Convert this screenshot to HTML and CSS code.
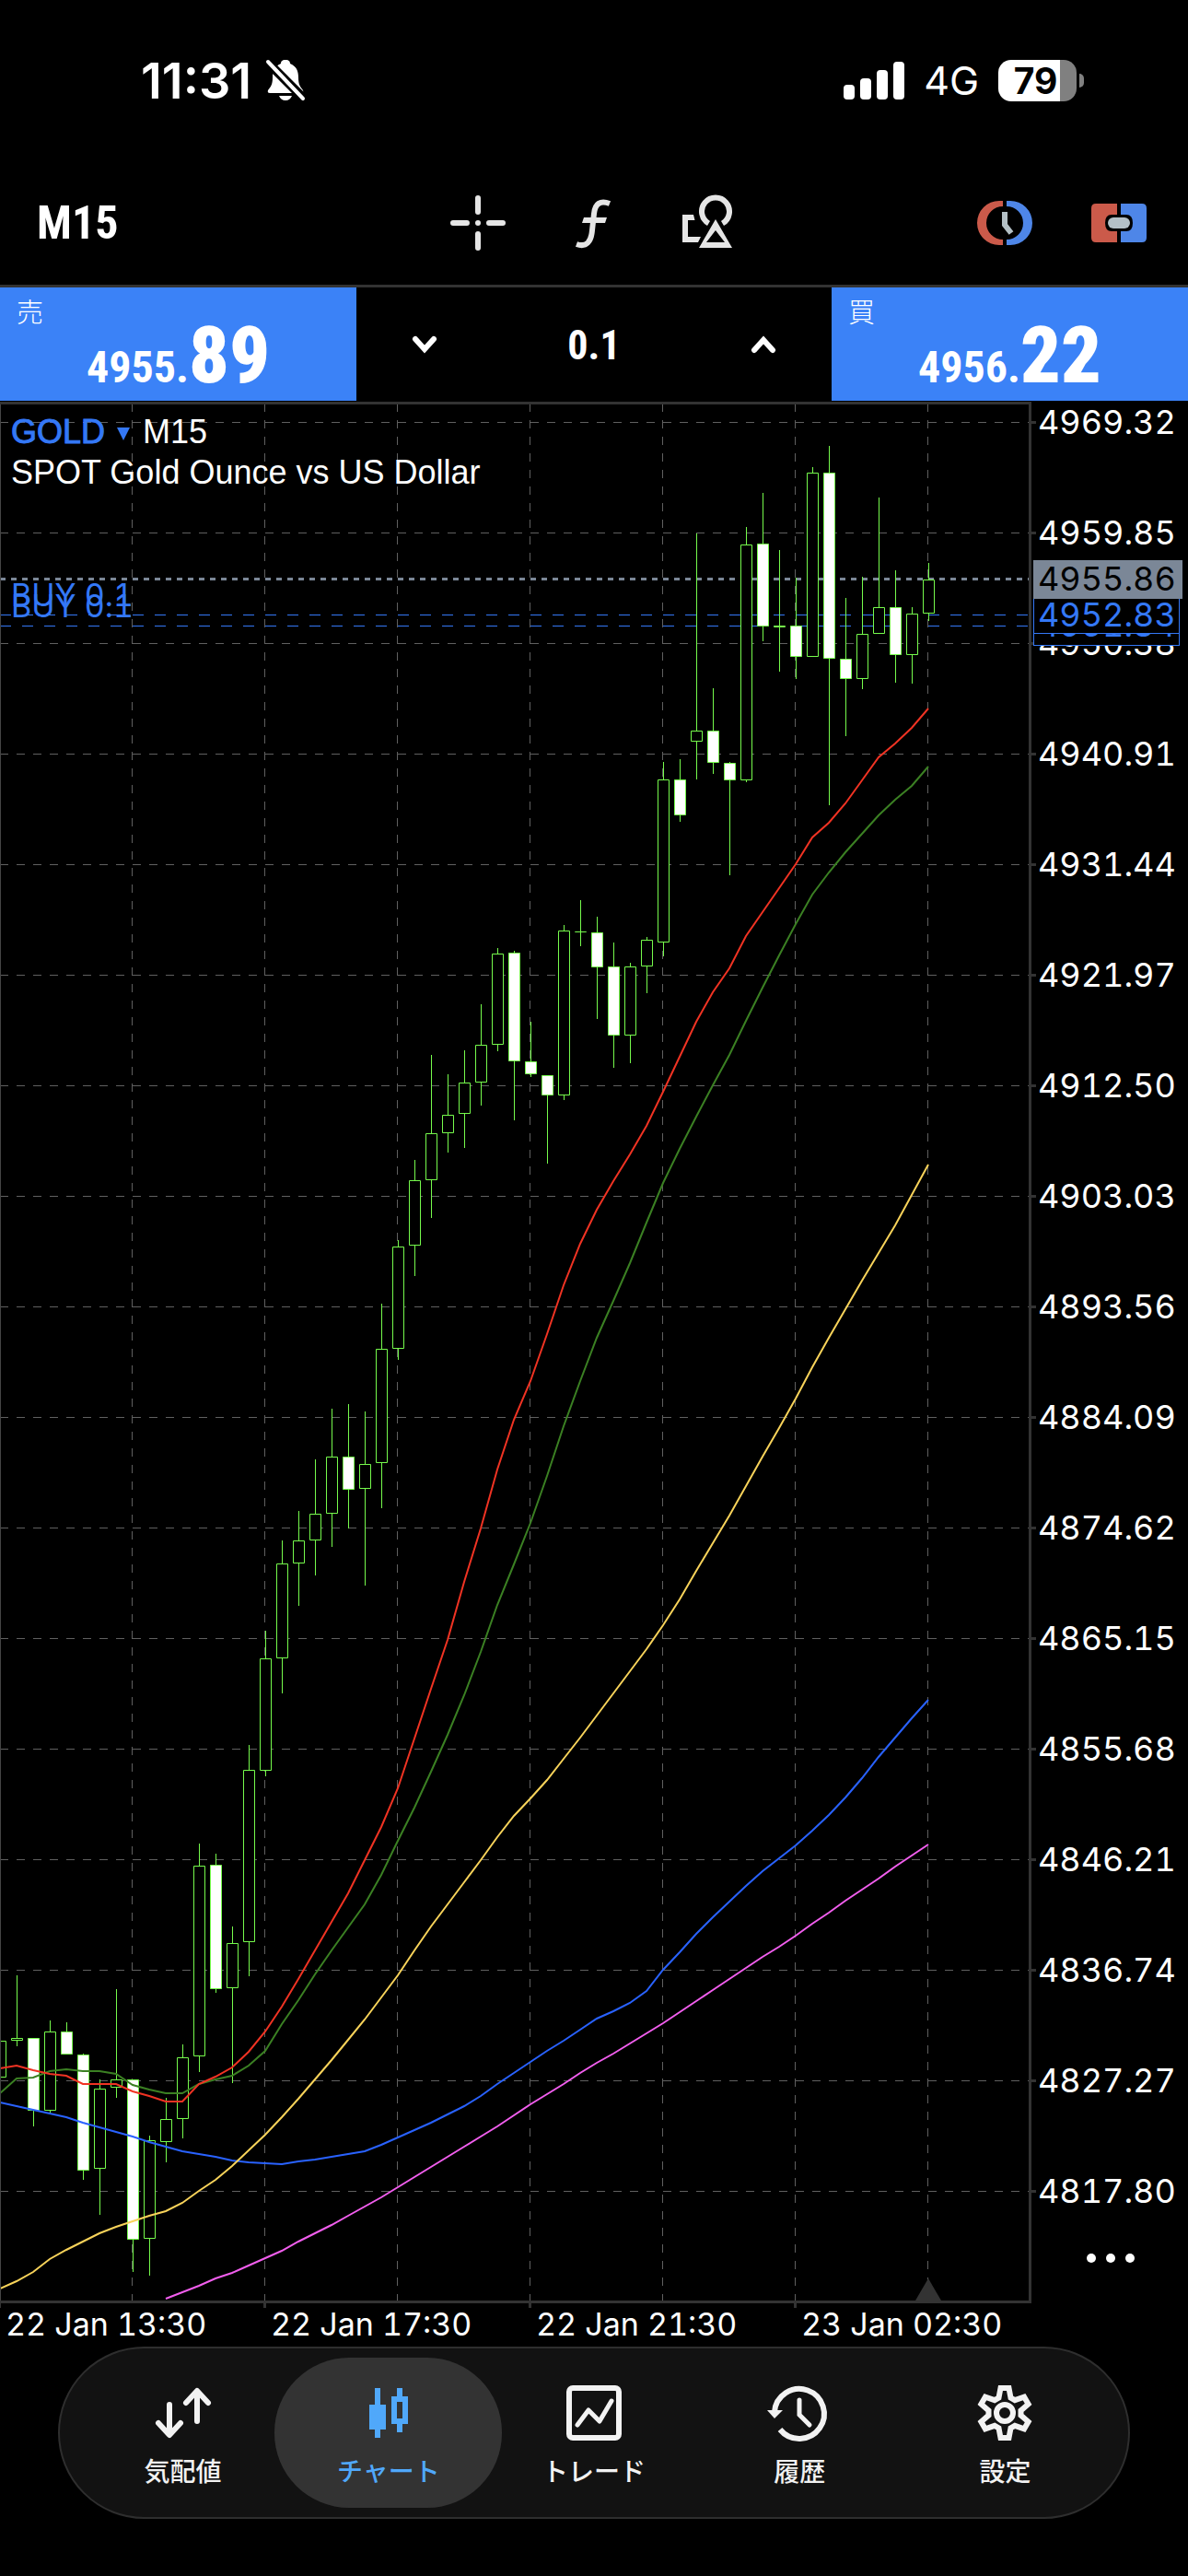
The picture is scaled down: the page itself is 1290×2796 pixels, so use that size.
FILE: index.html
```html
<!DOCTYPE html>
<html lang="ja">
<head>
    <meta charset="UTF-8">
    <meta name="viewport" content="width=device-width, initial-scale=1.0">
    <title>GOLD M15</title>
    <link rel="stylesheet" href="styles.css">
</head>
<body>
    <div class="status-bar">
        <div class="status-group">
            <span class="clock">11:31</span>
            <svg class="bell" viewBox="0 0 44 46">
                <path d="M22 1c-4 0-5 2-5 4C10 8 8 13 8 20C8 28 6 30 3 34Q2 37 5 37H39Q42 37 41 34C38 30 36 28 36 20C36 13 34 8 27 5C27 3 26 1 22 1Z" fill="#fff"/>
                <path d="M15 40H29Q27 45 22 45Q17 45 15 40Z" fill="#fff"/>
                <path d="M2 3L42 43" stroke="#000" stroke-width="10"/>
                <path d="M3 3L41 43" stroke="#fff" stroke-width="4" stroke-linecap="round"/>
            </svg>
        </div>
        <div class="status-group status-right">
            <svg class="signal" viewBox="0 0 66 42" fill="#fff">
                <rect x="0" y="26" width="12" height="16" rx="4"/>
                <rect x="18" y="19" width="12" height="23" rx="4"/>
                <rect x="36" y="10" width="12" height="32" rx="4"/>
                <rect x="54" y="1" width="12" height="41" rx="4"/>
            </svg>
            <span class="network">4G</span>
            <div class="battery"><span class="battery-level">79</span></div>
        </div>
    </div>

    <header class="toolbar">
        <button type="button" class="timeframe">M15</button>
        <div class="tools">
            <button type="button" aria-label="十字線">
                <svg class="icon" viewBox="0 0 60 60" fill="none" stroke="#e5e5e5" stroke-width="6" stroke-linecap="round">
                    <path d="M30 3V18M30 42V57M3 30H18M42 30H57M30 30V30"/>
                </svg>
            </button>
            <button type="button" aria-label="インディケータ">
                <svg class="icon" viewBox="0 0 60 60">
                    <path d="M49 9C39 5 33 9 32 20L30 38C29 50 24 57 13 53" fill="none" stroke="#e5e5e5" stroke-width="6"/>
                    <path d="M21 24H46L44 30H19Z" fill="#e5e5e5"/>
                </svg>
            </button>
            <button type="button" aria-label="オブジェクト">
                <svg class="icon" viewBox="0 0 60 60">
                    <path d="M32.5 30.5A15 15 0 1 1 47.5 30.5" fill="none" stroke="#e5e5e5" stroke-width="6"/>
                    <path d="M40 26L58 57H22ZM40 38L30 51H50Z" fill="#e5e5e5" fill-rule="evenodd"/>
                    <path d="M4 21H16L17.5 27H10V45H24L21 51H4Z" fill="#e5e5e5"/>
                </svg>
            </button>
        </div>
        <div class="tools tools-right">
            <button type="button" aria-label="板情報">
                <svg class="icon" viewBox="0 0 60 60" fill="none">
                    <path d="M28 6H24A24 24 0 0 0 24 54H28V48A18 18 0 0 1 28 12Z" fill="#cb5a4a"/>
                    <path d="M32 6H36A24 24 0 0 1 36 54H32V48A18 18 0 0 0 32 12Z" fill="#4e86e8"/>
                    <path d="M30 18V32L37 41" stroke="#b4c0c6" stroke-width="6"/>
                </svg>
            </button>
            <button type="button" aria-label="ワンクリック注文">
                <svg class="icon" viewBox="0 0 60 60">
                    <path d="M28 9H5Q0 9 0 14V46Q0 51 5 51H28V39H22Q15 39 15 30Q15 21 22 21H28Z" fill="#cb5a4a"/>
                    <path d="M32 9H55Q60 9 60 14V46Q60 51 55 51H32V39H38Q45 39 45 30Q45 21 38 21H32Z" fill="#4e86e8"/>
                    <rect x="18" y="24" width="24" height="12" rx="6" fill="#b4c0c6"/>
                </svg>
            </button>
        </div>
    </header>

    <section class="trade-panel">
        <button type="button" class="quote">
            <span class="quote-side">売</span>
            <span class="quote-price">4955.<b>89</b></span>
        </button>
        <div class="volume">
            <button type="button" aria-label="減らす">
                <svg class="chevron" viewBox="0 0 28 20"><path d="M4 4L14 15L24 4"/></svg>
            </button>
            <input type="text" value="0.1" aria-label="ロット">
            <button type="button" aria-label="増やす">
                <svg class="chevron" viewBox="0 0 28 20"><path d="M4 16L14 5L24 16"/></svg>
            </button>
        </div>
        <button type="button" class="quote">
            <span class="quote-side">買</span>
            <span class="quote-price">4956.<b>22</b></span>
        </button>
    </section>

    <main class="chart">
        <svg id="chart" viewBox="0 436 1290 2111">
            <g id="grid" class="grid"></g>
            <path class="bid-line" d="M0 628.5H1117"/>
            <path class="order-line" d="M0 667.5H1117M0 679.5H1117"/>
            <path class="marker" d="M1008 2473L1022 2497H994Z"/>
            <g id="candles" class="candles"></g>
            <g id="averages" class="averages"></g>
            <path class="frame-left" d="M0.5 436V2500"/>
            <path id="frame" class="frame" d="M0 437.5H1118.5V2498.5H0"/>
            <g id="labels" class="axis-text"></g>

            <text class="chart-title" x="12" y="481"><tspan class="symbol">GOLD</tspan></text>
            <path d="M127 464H141L134 478Z" fill="#3478f6"/>
            <text class="chart-title" x="155" y="481">M15</text>
            <text class="chart-title" x="12" y="525">SPOT Gold Ounce vs US Dollar</text>
            <text class="axis-text order-text order-label" x="12" y="658">BUY 0.1</text>
            <text class="axis-text order-text order-label" x="12" y="670">BUY 0.1</text>

            <rect class="order-tag" x="1122.5" y="663.5" width="158" height="37"/>
            <text class="axis-text order-text" x="1127" y="691">4951.84</text>
            <rect class="order-tag" x="1122.5" y="649.5" width="158" height="38"/>
            <text class="axis-text order-text" x="1127" y="680">4952.83</text>
            <rect class="bid-tag" x="1122" y="608" width="162" height="42"/>
            <text class="axis-text bid-text" x="1127" y="641">4955.86</text>
        </svg>
        <button type="button" class="more" aria-label="その他">
            <svg viewBox="0 0 54 12" fill="#fff"><circle cx="6" cy="6" r="5"/><circle cx="27" cy="6" r="5"/><circle cx="48" cy="6" r="5"/></svg>
        </button>
    </main>

    <nav class="tab-bar">
        <a href="#quotes">
            <svg class="icon" viewBox="0 0 60 60" fill="none" stroke="currentColor" stroke-width="6" stroke-linecap="round" stroke-linejoin="round">
                <path d="M15 21V53M3 41L15 54L27 41M45 39V7M33 19L45 6L57 19"/>
            </svg>
            気配値
        </a>
        <a href="#chart" class="active">
            <svg class="icon" viewBox="0 0 60 60" fill="currentColor">
                <path d="M15 3H21V21H27V48H21V57H15V48H9V21H15Z"/>
                <path d="M39 3H45V12H51V42H45V51H39V42H33V12H39ZM39 18V36H45V18Z" fill-rule="evenodd"/>
            </svg>
            チャート
        </a>
        <a href="#trade">
            <svg class="icon" viewBox="0 0 60 60" fill="none" stroke="currentColor" stroke-width="6">
                <rect x="3" y="3" width="54" height="54" rx="4"/>
                <path d="M12 43L24 27L36 39L49 17" stroke-width="5" stroke-linecap="round" stroke-linejoin="round"/>
            </svg>
            トレード
        </a>
        <a href="#history">
            <svg class="icon" viewBox="0 0 60 60" fill="none" stroke="currentColor" stroke-width="6">
                <path d="M3 29A27 27 0 1 1 9 48"/>
                <path d="M30 16V32L41 43" stroke-width="5" stroke-linecap="round"/>
                <path d="M-5 27H12L3 36Z" fill="currentColor" stroke="none"/>
            </svg>
            履歴
        </a>
        <a href="#settings">
            <svg class="icon" viewBox="0 0 60 60" fill="none" stroke="currentColor" stroke-width="6">
                <path d="M23.5 13.5L25.5 3H34.5L36.5 13.5L41 16.1L51.1 12.6L55.6 20.4L47.5 27.4V32.6L55.6 39.6L51.1 47.4L41 43.9L36.5 46.5L34.5 57H25.5L23.5 46.5L19 43.9L8.9 47.4L4.4 39.6L12.5 32.6V27.4L4.4 20.4L8.9 12.6L19 16.1Z"/>
                <circle cx="30" cy="30" r="9"/>
            </svg>
            設定
        </a>
    </nav>

    <script src="chart.js"></script>
</body>
</html>
```

FILE: styles.css
```css
* {
    box-sizing: border-box;
}
body {
    margin: 0;
    background: #000;
    color: #fff;
    font-family: Inter, "Noto Sans CJK JP", sans-serif;
}
button {
    padding: 0;
    border: none;
    background: none;
    color: inherit;
    font-family: inherit;
    cursor: pointer;
}
svg {
    display: block;
}
.icon {
    width: 60px;
    height: 60px;
    overflow: visible;
}

/* status bar */
.status-bar {
    display: flex;
    justify-content: space-between;
    align-items: center;
    height: 174px;
    padding: 0 113px 0 153px;
}
.status-group {
    display: flex;
    align-items: center;
    gap: 15px;
}
.status-right {
    gap: 21px;
}
.clock {
    font-size: 54px;
    font-weight: 600;
}
.bell {
    width: 44px;
    height: 46px;
}
.signal {
    width: 66px;
    height: 42px;
}
.network {
    font-size: 43px;
}
.battery {
    position: relative;
    width: 85px;
    height: 45px;
    margin-right: 8px;
    border-radius: 14px;
    background: linear-gradient(to right, #fff 79%, #808080 79%);
}
.battery::after {
    content: "";
    position: absolute;
    top: 15px;
    right: -8px;
    width: 5px;
    height: 15px;
    border-radius: 0 5px 5px 0;
    background: #808080;
}
.battery-level {
    display: block;
    width: 79%;
    margin-left: 7px;
    color: #000;
    font-size: 39px;
    font-weight: 700;
    line-height: 45px;
    text-align: center;
}

/* toolbar */
.toolbar {
    display: grid;
    grid-template-columns: 1fr auto 1fr;
    align-items: center;
    height: 138px;
    padding: 0 45px 0 40px;
    border-bottom: 3px solid #333;
}
.timeframe {
    justify-self: start;
    font-family: "Roboto Condensed", Roboto, sans-serif;
    font-size: 50px;
    font-weight: 700;
}
.tools {
    display: flex;
    gap: 64px;
}
.tools-right {
    justify-self: end;
}

/* one click trading */
.trade-panel {
    display: grid;
    grid-template-columns: 3fr 4fr 3fr;
    height: 124px;
    padding-bottom: 1px;
}
.quote {
    display: flex;
    flex-direction: column;
    background: #3b82f7;
    font-family: "Roboto Condensed", Roboto, "Noto Sans CJK JP", sans-serif;
    text-align: left;
}
.quote-side {
    margin: 10px 0 0 18px;
    font-size: 29px;
    font-weight: 300;
    line-height: 36px;
}
.quote-price {
    align-self: center;
    font-size: 48px;
    font-weight: 700;
    line-height: 56px;
}
.quote-price b {
    font-size: 86px;
}
.volume {
    display: grid;
    grid-template-columns: 148px 1fr 148px;
}
.volume button {
    display: flex;
    align-items: center;
    justify-content: center;
}
.volume input {
    width: 100%;
    min-width: 0;
    padding: 3px 0 0;
    border: none;
    background: none;
    color: #fff;
    font-family: "Roboto Condensed", Roboto, sans-serif;
    font-size: 44px;
    font-weight: 700;
    text-align: center;
}
.chevron {
    width: 28px;
    height: 20px;
    fill: none;
    stroke: #fff;
    stroke-width: 6px;
    stroke-linecap: round;
}

/* chart */
.chart {
    position: relative;
}
#chart {
    width: 100%;
    height: auto;
}
.grid {
    stroke: #606060;
    stroke-dasharray: 9 9;
}
.bid-line {
    stroke: #7b8797;
    stroke-width: 3px;
    stroke-dasharray: 6 6;
}
.order-line {
    stroke: #3478f6;
    stroke-dasharray: 12 12;
}
.candles {
    fill: #000;
    stroke: #76fb4c;
}
.candles .down {
    fill: #fff;
}
.averages {
    fill: none;
    stroke-width: 2px;
}
.frame {
    fill: none;
    stroke: #333;
    stroke-width: 3px;
}
.frame-left {
    stroke: #444;
}
.ticks {
    stroke: #333;
    stroke-width: 3px;
}
.marker {
    fill: #333;
}
.axis-text {
    fill: #fff;
    font-size: 36px;
    font-variant-numeric: tabular-nums;
}
.time,
.order-label {
    font-size: 34px;
}
.chart-title {
    fill: #fff;
    font-family: "Liberation Sans", sans-serif;
    font-size: 36px;
}
.symbol {
    fill: #3478f6;
    stroke: #3478f6;
    stroke-width: 1px;
}
.order-text {
    fill: #3478f6;
}
.bid-text {
    fill: #000;
}
.order-tag {
    fill: #000;
    stroke: #3478f6;
}
.bid-tag {
    fill: #7b8797;
}
.more {
    position: absolute;
    right: 57px;
    bottom: 90px;
}
.more svg {
    width: 54px;
    height: 12px;
}

/* tab bar */
.tab-bar {
    display: grid;
    grid-template-columns: repeat(5, 1fr);
    height: 187px;
    margin: 0 63px 63px;
    padding: 10px 22px;
    border: 2px solid #2e2e2e;
    border-radius: 94px;
    background: #121212;
}
.tab-bar a {
    display: flex;
    flex-direction: column;
    align-items: center;
    gap: 13px;
    margin: 0 -12px;
    padding-top: 30px;
    border-radius: 81px;
    color: #f2f2f2;
    font-size: 28px;
    font-weight: 500;
    line-height: 42px;
    text-decoration: none;
}
.tab-bar .active {
    background: #333;
    color: #50a8fa;
}
```

FILE: chart.js
```js
const STEP = 18;

// high, body top, body bottom, low, 1 = bearish
const candles = [
    [2215, 2215, 2254, 2254], [2144, 2212, 2214, 2220], [2212, 2212, 2290, 2307, 1],
    [2193, 2205, 2290, 2293], [2195, 2205, 2229, 2229, 1], [2229, 2230, 2355, 2365, 1],
    [2257, 2267, 2353, 2403], [2159, 2257, 2265, 2276], [2257, 2257, 2430, 2465, 1],
    [2318, 2323, 2429, 2469], [2277, 2300, 2324, 2346], [2219, 2233, 2299, 2320],
    [2001, 2025, 2231, 2248], [2012, 2024, 2158, 2162, 1], [2091, 2109, 2157, 2260],
    [1894, 1921, 2107, 2144], [1770, 1800, 1921, 1927], [1672, 1697, 1799, 1837],
    [1640, 1672, 1696, 1742], [1584, 1643, 1671, 1709], [1529, 1581, 1642, 1678],
    [1524, 1581, 1616, 1658, 1], [1532, 1589, 1615, 1720], [1415, 1464, 1587, 1636],
    [1346, 1353, 1463, 1475], [1259, 1281, 1351, 1384], [1145, 1230, 1280, 1321],
    [1166, 1210, 1229, 1250], [1140, 1175, 1208, 1245], [1090, 1134, 1174, 1199],
    [1029, 1035, 1133, 1140], [1032, 1034, 1151, 1215, 1], [1109, 1152, 1165, 1168, 1],
    [1167, 1167, 1188, 1262, 1], [1004, 1010, 1188, 1193], [977, 1011, 1011, 1026],
    [995, 1012, 1049, 1105, 1], [1023, 1049, 1123, 1158, 1], [1045, 1049, 1123, 1153],
    [1017, 1020, 1048, 1077], [827, 846, 1022, 1037], [824, 846, 884, 891, 1],
    [579, 793, 804, 845], [747, 793, 827, 839, 1], [827, 828, 846, 949, 1],
    [572, 591, 846, 848], [535, 590, 679, 695, 1], [597, 679, 680, 728],
    [627, 679, 712, 736, 1], [507, 513, 712, 712], [484, 513, 714, 873, 1],
    [649, 715, 736, 798, 1], [626, 688, 736, 747], [540, 659, 687, 687],
    [619, 659, 710, 740, 1], [659, 666, 710, 741], [611, 629, 665, 673]
];

// one value per candle, empty where the line is below the window
const averages = [
    { color: "#f25eee", values: [, , , , , , , , , , 2495, 2488, 2481, 2473, 2467, 2459, 2451, 2443, 2433, 2424, 2415, 2405, 2395, 2385, 2374, 2363, 2352, 2341, 2330, 2319, 2308, 2296, 2284, 2273, 2262, 2250, 2239, 2229, 2218, 2207, 2196, 2184, 2172, 2160, 2148, 2136, 2124, 2113, 2101, 2088, 2076, 2063, 2051, 2039, 2026, 2014, 2002] },
    { color: "#2962ff", values: [2282, 2286, 2290, 2294, 2298, 2304, 2309, 2314, 2319, 2325, 2330, 2335, 2338, 2341, 2345, 2347, 2348, 2349, 2346, 2344, 2341, 2338, 2335, 2328, 2320, 2312, 2304, 2295, 2286, 2275, 2262, 2250, 2238, 2226, 2215, 2203, 2191, 2183, 2174, 2161, 2138, 2119, 2099, 2081, 2064, 2047, 2031, 2017, 2003, 1987, 1970, 1951, 1930, 1907, 1886, 1865, 1845] },
    { color: "#f8d35a", values: [2484, 2476, 2466, 2452, 2442, 2433, 2424, 2417, 2411, 2405, 2400, 2391, 2378, 2366, 2351, 2334, 2317, 2298, 2278, 2257, 2236, 2214, 2192, 2168, 2144, 2117, 2091, 2067, 2043, 2019, 1994, 1971, 1952, 1932, 1909, 1886, 1862, 1838, 1814, 1790, 1764, 1736, 1705, 1675, 1645, 1613, 1581, 1550, 1518, 1484, 1452, 1421, 1390, 1360, 1330, 1297, 1264] },
    { color: "#3b8023", values: [2272, 2256, 2255, 2248, 2246, 2248, 2248, 2251, 2263, 2268, 2272, 2272, 2262, 2257, 2253, 2242, 2226, 2197, 2171, 2143, 2117, 2092, 2067, 2035, 1998, 1962, 1923, 1883, 1840, 1793, 1742, 1698, 1653, 1602, 1548, 1499, 1452, 1412, 1371, 1327, 1284, 1247, 1212, 1178, 1145, 1108, 1072, 1037, 1003, 971, 947, 925, 905, 885, 868, 853, 832] },
    { color: "#f03323", values: [2245, 2242, 2247, 2251, 2253, 2262, 2262, 2262, 2270, 2275, 2281, 2281, 2262, 2254, 2244, 2227, 2205, 2178, 2148, 2117, 2086, 2055, 2019, 1983, 1941, 1887, 1833, 1780, 1717, 1659, 1595, 1541, 1499, 1448, 1395, 1350, 1313, 1282, 1253, 1222, 1185, 1147, 1109, 1077, 1051, 1016, 990, 964, 938, 909, 893, 872, 847, 822, 807, 790, 769] }
];

const prices = ["4969.32", "4959.85", "4950.38", "4940.91", "4931.44", "4921.97", "4912.50", "4903.03", "4893.56",
    "4884.09", "4874.62", "4865.15", "4855.68", "4846.21", "4836.74", "4827.27", "4817.80"];
const times = ["22 Jan 13:30", "22 Jan 17:30", "22 Jan 21:30", "23 Jan 02:30"];

let grid = "";
let labels = "";
let ticks = "";

prices.forEach((price, i) => {
    const y = 458 + i * 120;
    grid += `<path d="M0 ${y + 0.5}H1117"/>`;
    ticks += `M1120 ${y + 0.5}h5`;
    labels += `<text x="1127" y="${y + 13}">${price}</text>`;
});
for (let x = 143; x < 1117; x += 144) {
    grid += `<path d="M${x + 0.5} 438V2497"/>`;
}
times.forEach((time, i) => {
    const x = i * 288;
    ticks += `M${x - 0.5} 2500v5`;
    labels += `<text class="time" x="${x + 6}" y="2535">${time}</text>`;
});

document.getElementById("grid").innerHTML = grid;
document.getElementById("labels").innerHTML = `<path class="ticks" d="${ticks}"/>` + labels;

document.getElementById("candles").innerHTML = candles.map(([high, top, bottom, low, down], i) => {
    const x = i * STEP + 0.5;
    return `<path d="M${x} ${high}V${low + 1}"/>` +
        `<path d="M${x - 6} ${top + 0.5}h12V${bottom + 0.5}h-12Z"${down ? ' class="down"' : ""}/>`;
}).join("");

document.getElementById("averages").innerHTML = averages.map(({ color, values }) => {
    const points = [];
    values.forEach((y, i) => points.push(`${i * STEP},${y}`));
    return `<polyline points="${points.join(" ")}" stroke="${color}"/>`;
}).join("");
```
